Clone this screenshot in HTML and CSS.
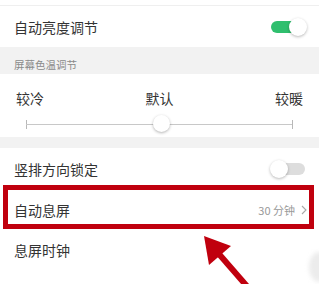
FILE: index.html
```html
<!DOCTYPE html>
<html lang="zh">
<head>
<meta charset="utf-8">
<link rel="stylesheet" href="styles.css">
</head>
<body>
<div class="page">
  <div class="top-gap"></div>
  <div class="row row-first">
    <span class="label">自动亮度调节</span>
    <span class="toggle on"><span class="track"></span><span class="thumb"></span></span>
  </div>
  <div class="section-head">屏幕色温调节</div>
  <div class="temp-block">
    <div class="temp-labels">
      <span>较冷</span><span>默认</span><span>较暖</span>
    </div>
    <div class="slider">
      <span class="tick tick-l"></span>
      <span class="line"></span>
      <span class="tick tick-r"></span>
      <span class="knob"></span>
    </div>
  </div>
  <div class="band"></div>
  <div class="row row-lock">
    <span class="label">竖排方向锁定</span>
    <span class="toggle off"><span class="track"></span><span class="thumb"></span></span>
  </div>
  <div class="row row-sleep">
    <span class="label">自动息屏</span>
    <span class="value">30 分钟
      <svg class="chev" width="6" height="10" viewBox="0 0 6 10"><path d="M1 1 L5 5 L1 9" fill="none" stroke="#a8a8a8" stroke-width="1.1"/></svg>
    </span>
  </div>
  <div class="row row-clock">
    <span class="label">息屏时钟</span>
  </div>
  <div class="highlight"></div>
  <svg class="arrow" width="319" height="284" viewBox="0 0 319 284">
    <line x1="212" y1="246" x2="252" y2="292" stroke="#c0000e" stroke-width="6"/>
    <polygon points="204,236 231,246 209,265" fill="#c0000e"/>
  </svg>
  <div class="blob"></div>
</div>
</body>
</html>
```
FILE: styles.css
```css
html, body {
  margin: 0;
  padding: 0;
  background: #ffffff;
}
.page {
  position: relative;
  width: 319px;
  height: 284px;
  overflow: hidden;
  font-family: "Noto Sans CJK SC", "Noto Sans", sans-serif;
  color: #333333;
}
.top-gap {
  height: 5px;
  border-bottom: 1px solid #efefef;
}
.row {
  display: flex;
  align-items: center;
  justify-content: space-between;
  padding: 0 12px 0 14px;
  font-size: 14px;
}
.row-first { height: 41px; }
.row-lock { height: 42px; padding-right: 14px; }
.row-sleep { height: 40px; }
.row-clock { height: 39px; }
.label { line-height: 20px; }
.section-head {
  height: 27px;
  box-sizing: border-box;
  background: #f2f2f2;
  padding: 11px 0 0 14px;
  font-size: 10.5px;
  line-height: 14px;
  color: #8a8a8a;
}
.temp-block {
  height: 63px;
  box-sizing: border-box;
  padding-top: 14px;
}
.temp-labels {
  display: flex;
  justify-content: space-between;
  padding: 0 16px;
  font-size: 14px;
  line-height: 20px;
  color: #333;
}
.slider {
  position: relative;
  height: 18px;
  margin: 7px 26px 0 26px;
}
.line {
  position: absolute;
  left: 0;
  right: 0;
  top: 9px;
  height: 1px;
  background: #c8c8c8;
}
.tick {
  position: absolute;
  top: 5px;
  width: 1px;
  height: 9px;
  background: #b8b8b8;
}
.tick-l { left: 0; }
.tick-r { right: 0; }
.knob {
  position: absolute;
  left: 50%;
  top: 0;
  width: 17px;
  height: 17px;
  margin-left: -7px;
  border-radius: 50%;
  background: #ffffff;
  box-shadow: 0 1px 3px rgba(0,0,0,0.3);
}
.band {
  height: 11px;
  background: #f2f2f2;
}
.toggle {
  position: relative;
  display: block;
  width: 36px;
  height: 18px;
}
.toggle .track {
  position: absolute;
  top: 3px;
  height: 12px;
  border-radius: 6px;
}
.toggle .thumb {
  position: absolute;
  top: 0;
  width: 18px;
  height: 18px;
  border-radius: 50%;
  background: #ffffff;
  box-shadow: 0 1px 3px rgba(0,0,0,0.28);
}
.toggle.on .track { left: 0; width: 30px; background: #2fbf6e; }
.toggle.on .thumb { right: 0; }
.toggle.off { width: 35px; }
.toggle.off .track { left: 2px; width: 33px; background: #dddddd; }
.toggle.off .thumb { left: 0; }
.value {
  display: flex;
  align-items: center;
  gap: 6px;
  font-size: 11px;
  color: #999999;
}
.chev { display: block; }
.highlight {
  position: absolute;
  left: 3px;
  top: 185px;
  width: 311px;
  height: 44px;
  box-sizing: border-box;
  border: 5px solid #c0000e;
}
.arrow {
  position: absolute;
  left: 0;
  top: 0;
}
.blob {
  position: absolute;
  left: 309px;
  top: 252px;
  width: 20px;
  height: 30px;
  border-radius: 50%;
  background: #ececec;
  filter: blur(2px);
}
```
